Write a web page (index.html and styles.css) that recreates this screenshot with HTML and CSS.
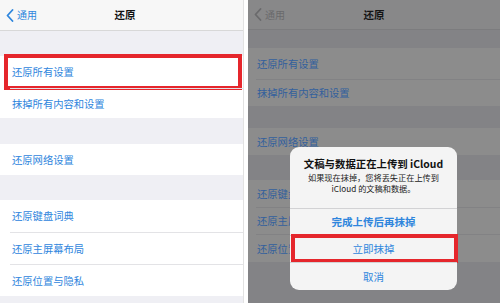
FILE: index.html
```html
<!DOCTYPE html>
<html lang="zh-CN">
<head>
<meta charset="utf-8">
<title>还原</title>
<link rel="stylesheet" href="styles.css">
</head>
<body>
<div class="screens">
  <section class="phone light">
    <header class="nav">
      <div class="back">
        <svg class="chev" width="8" height="13" viewBox="0 0 8 13"><path d="M6.5 1 L1.5 6.5 L6.5 12" fill="none" stroke="currentColor" stroke-width="1.8" stroke-linecap="round" stroke-linejoin="round"/></svg>
        <span>通用</span>
      </div>
      <div class="title">还原</div>
      <div></div>
    </header>
    <div class="gap ga"></div>
    <div class="group">
      <div class="row r1">还原所有设置<span class="mark mark-left"></span></div>
      <div class="row r2">抹掉所有内容和设置</div>
    </div>
    <div class="gap gb"></div>
    <div class="group">
      <div class="row r3">还原网络设置</div>
    </div>
    <div class="gap gc"></div>
    <div class="group">
      <div class="row r4">还原键盘词典</div>
      <div class="row r4">还原主屏幕布局</div>
      <div class="row r4">还原位置与隐私</div>
    </div>
  </section>

  <section class="phone dim">
    <header class="nav">
      <div class="back">
        <svg class="chev" width="8" height="13" viewBox="0 0 8 13"><path d="M6.5 1 L1.5 6.5 L6.5 12" fill="none" stroke="currentColor" stroke-width="1.8" stroke-linecap="round" stroke-linejoin="round"/></svg>
        <span>通用</span>
      </div>
      <div class="title">还原</div>
      <div></div>
    </header>
    <div class="gap ga"></div>
    <div class="group">
      <div class="row r1">还原所有设置</div>
      <div class="row r2">抹掉所有内容和设置</div>
    </div>
    <div class="gap gb"></div>
    <div class="group">
      <div class="row r3">还原网络设置</div>
    </div>
    <div class="gap gc"></div>
    <div class="group">
      <div class="row r4">还原键盘词典</div>
      <div class="row r4">还原主屏幕布局</div>
      <div class="row r4 r6">还原位置与隐私</div>
    </div>

    <div class="alert">
      <div class="alert-body">
        <div class="alert-title">文稿与数据正在上传到 iCloud</div>
        <div class="alert-msg">如果现在抹掉，您将丢失正在上传到<br>iCloud 的文稿和数据。</div>
      </div>
      <div class="btn bold">完成上传后再抹掉</div>
      <div class="btn">立即抹掉<span class="mark mark-right"></span></div>
      <div class="btn">取消</div>
    </div>
  </section>
</div>
</body>
</html>
```

FILE: styles.css
```css
* { box-sizing: border-box; }

body {
  margin: 0;
  width: 500px;
  height: 303px;
  overflow: hidden;
  background: #ffffff;
  font-family: "Noto Sans CJK SC", "Noto Sans", sans-serif;
}

.screens {
  display: flex;
  height: 303px;
}

.phone {
  overflow: hidden;
  display: flex;
  flex-direction: column;
}

.phone.light {
  width: 244px;
  border-right: 1px solid #e2e2e2;
  margin-right: 4px;
  background: #efeff4;
}

.phone.dim {
  flex: 1;
  background: #838386;
  position: relative;
}

/* nav bar */
.nav {
  flex: none;
  display: grid;
  grid-template-columns: 1fr auto 1fr;
  align-items: center;
}

.light .nav {
  width: 250px;
  height: 31px;
  background: #f7f7f7;
  border-bottom: 1px solid #d8d8d8;
}

.dim .nav {
  height: 30px;
  background: #888889;
  border-bottom: 1px solid #7c7c7e;
}

.back {
  display: flex;
  align-items: center;
  gap: 3px;
  padding-left: 6px;
  font-size: 10px;
  line-height: 14px;
}

.light .back { color: #2f86dd; }
.dim .back { color: #6a6a6c; }

.chev { display: block; }

.title {
  font-size: 10.5px;
  line-height: 14px;
  font-weight: 700;
  color: #111111;
}

.dim .title { color: #151515; }

/* sections */
.gap { flex: none; }
.light .ga { height: 25px; }
.light .gb { height: 26px; }
.light .gc { height: 25px; }
.dim .ga { height: 18px; }
.dim .gb { height: 22px; }
.dim .gc { height: 25px; }

.group { flex: none; }
.light .group { background: #ffffff; }
.dim .group { background: #8c8c8c; }

.row {
  position: relative;
  display: flex;
  align-items: center;
  font-size: 10.3px;
  line-height: 14px;
}

.light .row {
  margin-left: 10px;
  padding-left: 2px;
  color: #2f86dd;
}

.dim .row {
  margin-left: 8px;
  padding-left: 1px;
  color: #33609d;
}

.light .row + .row { border-top: 1px solid #e3e3e6; }
.dim .row + .row { border-top: 1px solid #828284; }

.light .r1 { height: 32px; }
.light .r2 { height: 30px; }
.light .r3 { height: 31px; }
.light .r4 { height: 32px; }

.dim .r1 { height: 31px; }
.dim .r2 { height: 27px; }
.dim .r3 { height: 27px; }
.dim .r4 { height: 27px; }
.dim .r6 { height: 28px; }

/* red highlight marks */
.mark {
  position: absolute;
  border: 4px solid #e5262c;
  pointer-events: none;
}

.mark-left {
  left: -6px;
  right: 1px;
  top: -2px;
  bottom: -2px;
}

.mark-right {
  left: 1px;
  right: -1px;
  top: -2px;
  bottom: -1px;
}

/* alert */
.alert {
  position: absolute;
  left: 42px;
  top: 147px;
  width: 167px;
  height: 143px;
  background: #f4f4f4;
  border-radius: 9px;
  display: flex;
  flex-direction: column;
}

.alert-body {
  height: 61px;
  padding-top: 10px;
  text-align: center;
}

.alert-title {
  font-size: 10.4px;
  line-height: 14px;
  font-weight: 700;
  color: #111111;
}

.alert-msg {
  margin-top: 1px;
  font-size: 8.2px;
  line-height: 11px;
  color: #222222;
}

.btn {
  position: relative;
  height: 27px;
  border-top: 1px solid #d2d2d4;
  display: flex;
  align-items: center;
  justify-content: center;
  font-size: 10.5px;
  line-height: 14px;
  color: #2f86dd;
}

.btn:last-child { flex: 1; }

.btn.bold { font-weight: 700; }
```
